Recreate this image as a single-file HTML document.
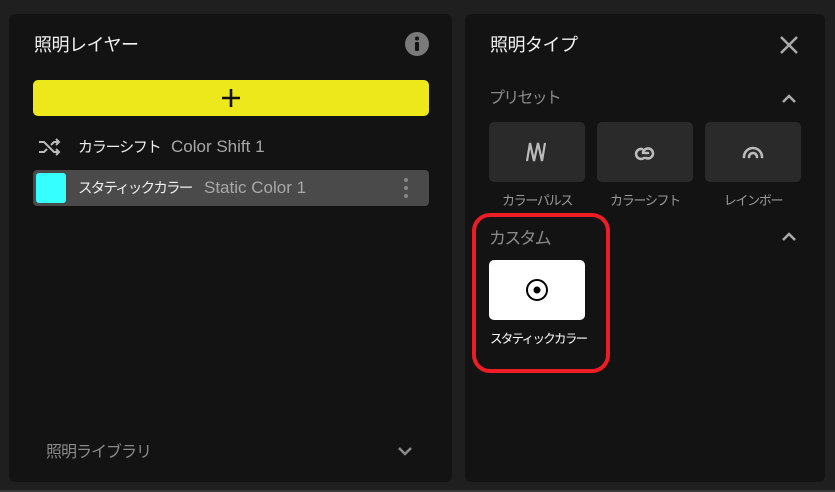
<!DOCTYPE html>
<html><head><meta charset="utf-8"><style>
*{margin:0;padding:0;box-sizing:border-box}
body{width:835px;height:492px;background:#1f1f1f;position:relative;overflow:hidden;font-family:"Liberation Sans","Noto Sans CJK JP",sans-serif;color:#fff}
.p{position:absolute;background:#131313;border-radius:6px}
.a{position:absolute;white-space:nowrap;line-height:1}
.tile{position:absolute;top:122px;width:96px;height:60px;background:#2a2a2a;border-radius:5px}
.lab{position:absolute;top:194px;font-size:13px;line-height:1;letter-spacing:-1.3px;color:#9a9a9a;width:96px;text-align:center}
</style></head><body>
<div style="position:absolute;left:0;right:0;bottom:0;height:2px;background:#3a3a3a"></div>
<div class="p" style="left:9px;top:14px;width:443px;height:468px"></div>
<div class="p" style="left:465px;top:14px;width:360px;height:468px"></div>

<div class="a" style="left:34px;top:36px;font-size:18px;color:#f2f2f2;letter-spacing:-0.5px">照明レイヤー</div>
<svg class="a" style="left:405px;top:32px" width="24" height="24"><circle cx="12" cy="12" r="12" fill="#7a7a7a"/><circle cx="12" cy="6.5" r="2" fill="#131313"/><rect x="10" y="10" width="4" height="9" rx="1" fill="#131313"/></svg>
<div class="a" style="left:33px;top:80px;width:396px;height:36px;background:#ece81c;border-radius:5px"></div>
<svg class="a" style="left:221px;top:88px" width="20" height="20"><path d="M10 1v18M1 10h18" stroke="#111" stroke-width="2.6"/></svg>

<svg class="a" style="left:38px;top:138px" width="24" height="18" fill="none" stroke="#bbb" stroke-width="2"><path d="M1 4h5l10 10h5M1 14h5l3-3M13 7l3-3h5M18 1l3 3-3 3M18 11l3 3-3 3"/></svg>
<div class="a" style="left:78px;top:140px;font-size:15px;letter-spacing:-1.2px;color:#eee">カラーシフト</div>
<div class="a" style="left:171px;top:138px;font-size:17px;color:#a8a8a8">Color Shift 1</div>

<div class="a" style="left:33px;top:170px;width:396px;height:36px;background:#4a4a4a;border-radius:4px"></div>
<div class="a" style="left:36px;top:173px;width:30px;height:30px;background:#36ffff;border-radius:3px"></div>
<div class="a" style="left:78px;top:182px;font-size:14.5px;letter-spacing:-1.8px;color:#eee">スタティックカラー</div>
<div class="a" style="left:204px;top:179px;font-size:17px;color:#a8a8a8">Static Color 1</div>
<svg class="a" style="left:402px;top:177px" width="8" height="22" fill="#888"><circle cx="4" cy="3" r="2"/><circle cx="4" cy="11" r="2"/><circle cx="4" cy="19" r="2"/></svg>

<div class="a" style="left:46px;top:445px;font-size:16px;letter-spacing:-1px;color:#8a8a8a">照明ライブラリ</div>
<svg class="a" style="left:397px;top:445px" width="16" height="12" fill="none" stroke="#8a8a8a" stroke-width="2.5"><path d="M2 3l6 6 6-6"/></svg>

<div class="a" style="left:490px;top:36px;font-size:18px;letter-spacing:-0.5px;color:#f2f2f2">照明タイプ</div>
<svg class="a" style="left:779px;top:35px" width="20" height="20" stroke="#aaa" stroke-width="2.5"><path d="M2 2l16 16M18 2L2 18"/></svg>

<div class="a" style="left:489px;top:91px;font-size:16px;letter-spacing:-1.8px;color:#8a8a8a">プリセット</div>
<svg class="a" style="left:781px;top:93px" width="16" height="12" fill="none" stroke="#aaa" stroke-width="2.5"><path d="M2 9l6-6 6 6"/></svg>
<div class="tile" style="left:489px"></div>
<div class="tile" style="left:597px"></div>
<div class="tile" style="left:705px"></div>
<svg class="a" style="left:525px;top:141px" width="22" height="22" fill="none" stroke="#bbb" stroke-width="2.2"><path d="M2 20L5 2L9 20L13 2L17 20L20 2"/></svg>
<svg class="a" style="left:633px;top:140px" width="24" height="22" fill="none" stroke="#bbb" stroke-width="2.6" stroke-linecap="round"><path d="M9 9a5 5 0 1 0 2 9M10 13a5 5 0 1 1 3 5M12 13h3"/></svg>
<svg class="a" style="left:741px;top:142px" width="24" height="17" fill="none" stroke="#bbb" stroke-width="2.6" stroke-linecap="round"><path d="M3 15a9 9 0 0 1 18 0M8 15a4 4 0 0 1 8 0"/></svg>
<div class="lab" style="left:489px">カラーパルス</div>
<div class="lab" style="left:597px">カラーシフト</div>
<div class="lab" style="left:705px">レインボー</div>

<div class="a" style="left:472px;top:213px;width:138px;height:160px;border:4px solid #ee1c25;border-radius:18px"></div>
<div class="a" style="left:489px;top:230px;font-size:17px;letter-spacing:-1.8px;color:#8a8a8a">カスタム</div>
<svg class="a" style="left:781px;top:231px" width="16" height="12" fill="none" stroke="#aaa" stroke-width="2.5"><path d="M2 9l6-6 6 6"/></svg>
<div class="a" style="left:489px;top:260px;width:96px;height:60px;background:#fff;border-radius:5px"></div>
<svg class="a" style="left:525px;top:278px" width="24" height="24"><circle cx="12" cy="12" r="10" fill="none" stroke="#000" stroke-width="2"/><circle cx="12" cy="12" r="3.5" fill="#000"/></svg>
<div class="a" style="left:490px;top:333px;font-size:12.5px;letter-spacing:-1.7px;color:#fff">スタティックカラー</div>
</body></html>
